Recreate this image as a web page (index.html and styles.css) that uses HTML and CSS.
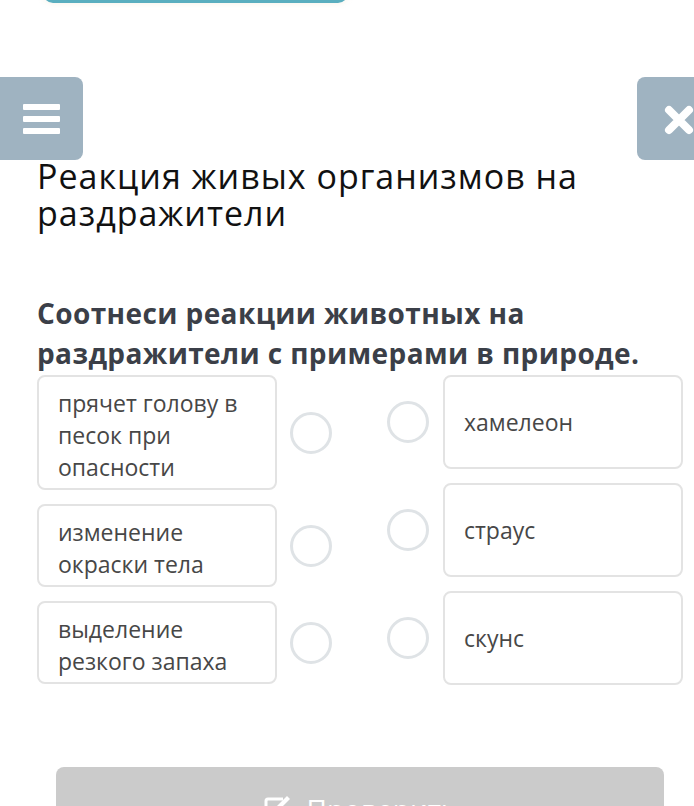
FILE: index.html
```html
<!DOCTYPE html>
<html lang="ru">
<head>
<meta charset="utf-8">
<title>Реакция живых организмов на раздражители</title>
<link rel="stylesheet" href="styles.css">
</head>
<body>
<div class="page">
  <div class="top-btn"></div>
  <div class="toolbar">
    <button class="tool-btn menu-btn" aria-label="Меню">
      <svg width="37" height="31" viewBox="0 0 37 31"><rect x="0" y="0" width="37" height="6" rx="1" fill="#fff"/><rect x="0" y="12" width="37" height="6" rx="1" fill="#fff"/><rect x="0" y="24" width="37" height="6" rx="1" fill="#fff"/></svg>
    </button>
    <button class="tool-btn close-btn" aria-label="Закрыть">
      <svg width="30" height="30" viewBox="0 0 30 30"><path d="M5 5 L25 25 M25 5 L5 25" stroke="#fff" stroke-width="8" stroke-linecap="round"/></svg>
    </button>
  </div>
  <h1 class="title">Реакция живых организмов на раздражители</h1>
  <p class="question">Соотнеси реакции животных на раздражители с примерами в природе.</p>
  <div class="match">
    <div class="col col-left">
      <div class="pair">
        <div class="card card-l">прячет голову в песок при опасности</div>
        <span class="dot"></span>
      </div>
      <div class="pair">
        <div class="card card-l">изменение окраски тела</div>
        <span class="dot"></span>
      </div>
      <div class="pair">
        <div class="card card-l">выделение резкого запаха</div>
        <span class="dot"></span>
      </div>
    </div>
    <div class="col col-right">
      <div class="pair">
        <span class="dot"></span>
        <div class="card card-r">хамелеон</div>
      </div>
      <div class="pair">
        <span class="dot"></span>
        <div class="card card-r">страус</div>
      </div>
      <div class="pair">
        <span class="dot"></span>
        <div class="card card-r">скунс</div>
      </div>
    </div>
  </div>
  <button class="check-btn">
    <svg width="30" height="28" viewBox="0 0 30 28"><path d="M20 4 H5 Q3 4 3 6 V23 Q3 25 5 25 H22 Q24 25 24 23 V16" fill="none" stroke="#fff" stroke-width="3"/><path d="M10 18 L11 14 L24 1 L27 4 L14 17 Z" fill="#fff"/></svg>
    <span>Проверить</span>
  </button>
</div>
</body>
</html>
```
FILE: styles.css
```css
html, body {
  margin: 0;
  padding: 0;
  background: #fff;
  overflow: hidden;
}
.page {
  width: 694px;
  height: 806px;
  overflow: hidden;
  font-family: "Open Sans", "Noto Sans", sans-serif;
}
.top-btn {
  width: 299px;
  height: 50px;
  margin: -53px 0 0 43px;
  border: 3px solid #5aaebf;
  border-radius: 10px;
  box-shadow: 0 0 6px rgba(220, 200, 150, 0.25);
}
.toolbar {
  display: flex;
  justify-content: space-between;
  margin-top: 74px;
}
.tool-btn {
  width: 83px;
  height: 83px;
  border: 0;
  padding: 0;
  background: #9fb3c1;
  display: flex;
  align-items: center;
  justify-content: center;
}
.menu-btn {
  border-radius: 0 8px 8px 0;
  padding-top: 2px;
}
.close-btn {
  border-radius: 8px 0 0 8px;
  margin-right: -26px;
  padding-top: 2px;
}
.title {
  margin: -2px 0 0 37px;
  font-size: 34px;
  letter-spacing: 1px;
  line-height: 37px;
  font-weight: 400;
  color: #111;
}
.question {
  margin: 61px 0 0 37px;
  font-size: 28px;
  letter-spacing: 0.4px;
  line-height: 40px;
  font-weight: 700;
  color: #3b3f48;
}
.match {
  display: flex;
  margin: 2px 0 0 37px;
  gap: 55px;
}
.col {
  display: flex;
  flex-direction: column;
  gap: 14px;
}
.pair {
  display: flex;
  align-items: center;
}
.col-left .pair { gap: 13px; }
.col-right .pair { gap: 14px; }
.card {
  box-sizing: border-box;
  width: 240px;
  border: 2px solid #e3e3e3;
  border-radius: 8px;
  font-size: 23px;
  line-height: 32px;
  color: #474747;
}
.card-l {
  padding: 10px 12px 5px 19px;
}
.card-r {
  height: 94px;
  padding: 0 12px 0 19px;
  display: flex;
  align-items: center;
}
.dot {
  box-sizing: border-box;
  width: 42px;
  height: 42px;
  border: 3px solid #dfe3e6;
  border-radius: 50%;
  flex: none;
}
.check-btn {
  display: flex;
  align-items: flex-start;
  justify-content: center;
  gap: 14px;
  width: 608px;
  height: 80px;
  margin: 82px 0 0 56px;
  padding: 22px 0 0 0;
  border: 0;
  border-radius: 8px;
  background: #cbcbcb;
  color: #fff;
  font-family: "Open Sans", "Noto Sans", sans-serif;
  font-size: 28px;
  line-height: 40px;
  font-weight: 400;
}
.check-btn svg {
  margin-top: 6px;
}
```
